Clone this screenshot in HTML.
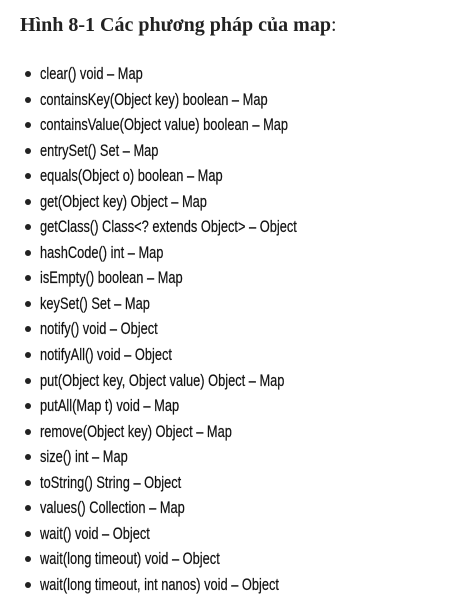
<!DOCTYPE html>
<html><head><meta charset="utf-8"><style>
body{margin:0;background:#fff;width:456px;height:604px;overflow:hidden;}
h3{position:absolute;left:20px;top:14px;margin:0;font:bold 20px "Liberation Serif",serif;color:#222;white-space:nowrap;}
h3 span{font-weight:normal;}
ul{position:absolute;left:0;top:61px;margin:0;padding:0 0 0 40px;list-style:none;}
li{position:relative;height:25.55px;font:17px "Liberation Sans",sans-serif;line-height:25.55px;color:#111;white-space:nowrap;}
li span{display:inline-block;transform:scaleX(0.755);transform-origin:0 50%;-webkit-text-stroke:0.2px #111;}
li:before{content:"";position:absolute;left:-15px;top:10px;width:6px;height:6px;border-radius:50%;background:#222;}
</style></head><body>
<h3>Hình 8-1 Các phương pháp của map<span>:</span></h3>
<ul>
<li><span>clear() void – Map</span></li>
<li><span>containsKey(Object key) boolean – Map</span></li>
<li><span>containsValue(Object value) boolean – Map</span></li>
<li><span>entrySet() Set – Map</span></li>
<li><span>equals(Object o) boolean – Map</span></li>
<li><span>get(Object key) Object – Map</span></li>
<li><span>getClass() Class&lt;? extends Object&gt; – Object</span></li>
<li><span>hashCode() int – Map</span></li>
<li><span>isEmpty() boolean – Map</span></li>
<li><span>keySet() Set – Map</span></li>
<li><span>notify() void – Object</span></li>
<li><span>notifyAll() void – Object</span></li>
<li><span>put(Object key, Object value) Object – Map</span></li>
<li><span>putAll(Map t) void – Map</span></li>
<li><span>remove(Object key) Object – Map</span></li>
<li><span>size() int – Map</span></li>
<li><span>toString() String – Object</span></li>
<li><span>values() Collection – Map</span></li>
<li><span>wait() void – Object</span></li>
<li><span>wait(long timeout) void – Object</span></li>
<li><span>wait(long timeout, int nanos) void – Object</span></li>
</ul>
</body></html>
